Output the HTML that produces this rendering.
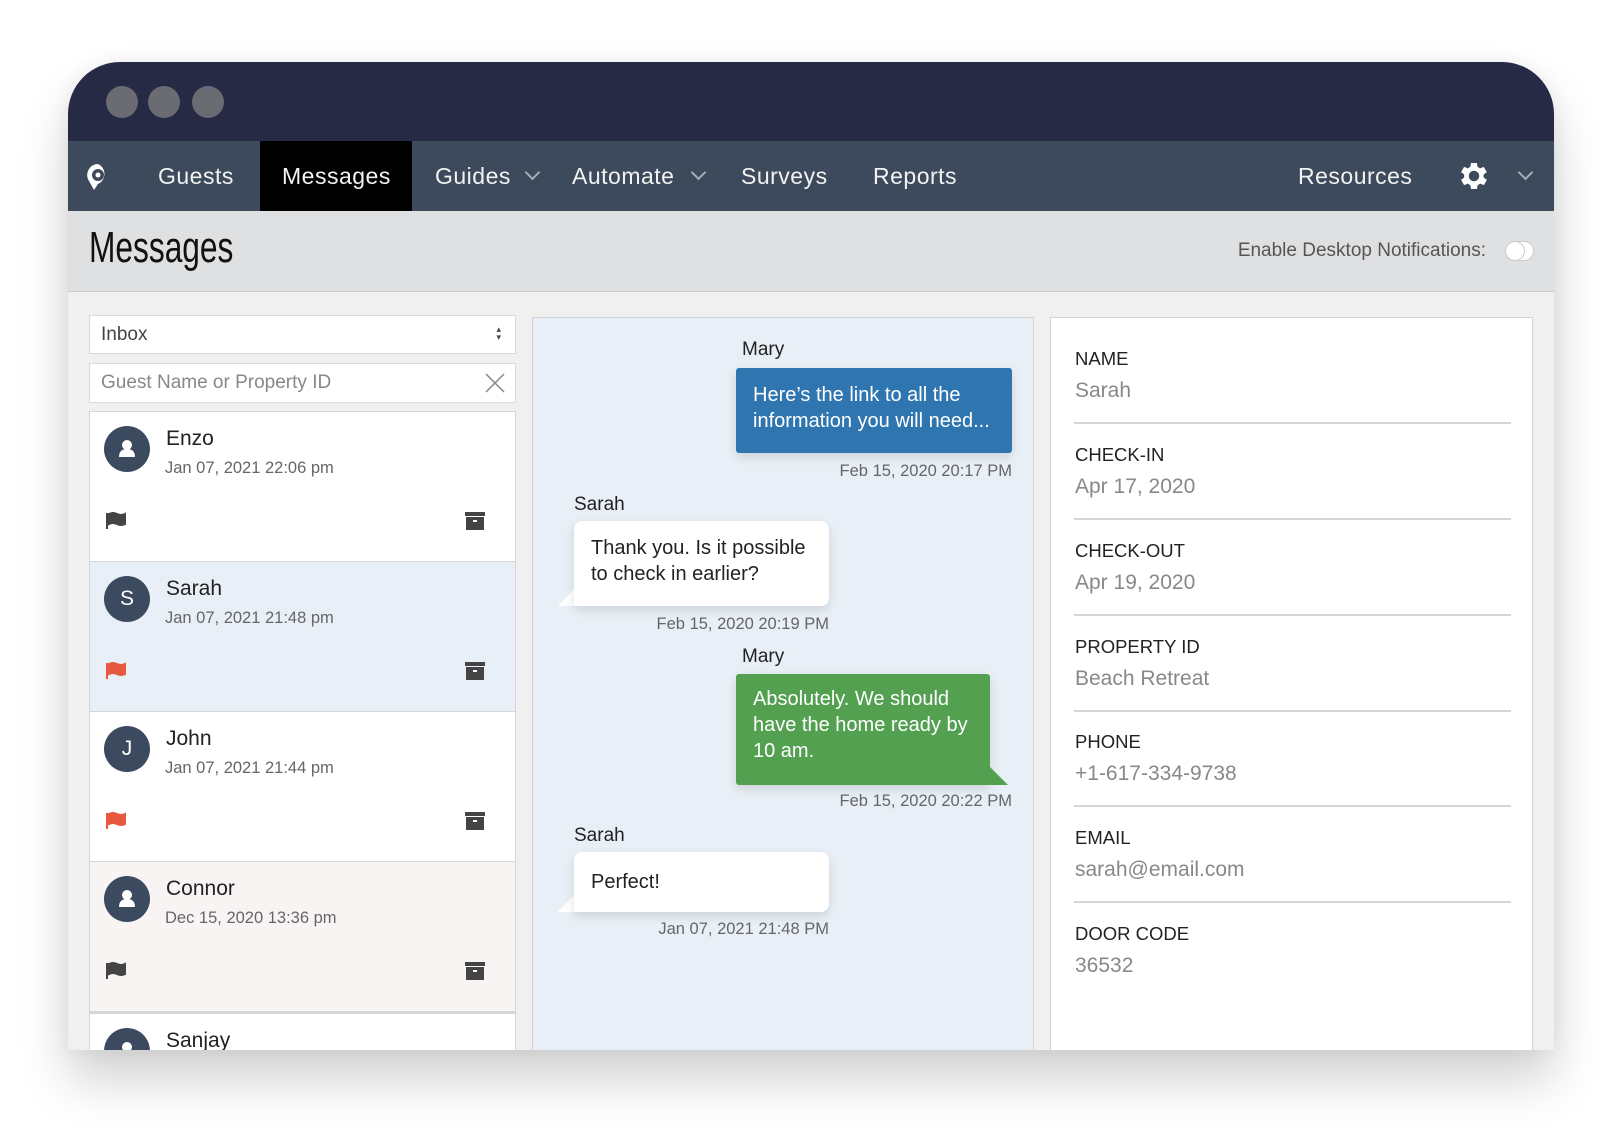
<!DOCTYPE html>
<html><head><meta charset="utf-8"><style>
*{box-sizing:border-box;margin:0;padding:0}
body{width:1622px;height:1124px;background:#fff;position:relative;overflow:hidden;font-family:"Liberation Sans",sans-serif}
.abs{position:absolute}
.win{left:68px;top:62px;width:1486px;height:988px;border-radius:52px 52px 0 0;overflow:hidden;background:#f0f0f0;box-shadow:0 30px 50px rgba(0,0,0,.18),0 0 20px rgba(0,0,0,.06)}
.dot{width:32px;height:32px;border-radius:50%;background:#6a6b73;top:24px}
.nav{top:79px;left:0;width:1486px;height:70px;background:#3c4a5c}
.nt{color:#f2f2f2;font-size:23px;letter-spacing:.5px;top:0;line-height:70px}
.chev{width:11px;height:11px;border-right:2px solid #aab;border-bottom:2px solid #aab;transform:rotate(45deg)}
.hdr{top:149px;left:0;width:1486px;height:81px;background:#dfe0e2;border-bottom:1px solid #ccc}
.box{background:#fff;border:2px solid #d9d9d9}
.item{left:21px;width:427px;height:150px;border:1px solid #d6d6d6;border-top:none}
.av{left:14px;top:14px;width:46px;height:46px;border-radius:50%;background:#3b4a5e;color:#fff;font-size:21px;text-align:center;line-height:46px}
.nm{left:76px;top:15px;font-size:21px;color:#222}
.dt{left:75px;top:47px;font-size:16.5px;color:#666}
.flag{left:16px;top:100px}
.arc{left:375px;top:100px}
.who{font-size:19px;color:#222}
.ts{font-size:16.5px;color:#666;text-align:right}
.bub{font-size:20px;line-height:26px;padding:0 17px;box-shadow:0 4px 10px rgba(0,0,0,.12)}
.lbl{left:24px;font-size:18.5px;color:#222}
.val{left:24px;font-size:21px;color:#888}
.hr{left:23px;width:437px;height:2px;background:#d5d5d5}
</style></head><body>
<div class="abs win">
  <div class="abs" style="left:0;top:0;width:1486px;height:79px;background:#272a45"></div>
  <div class="abs dot" style="left:38px"></div>
  <div class="abs dot" style="left:80px"></div>
  <div class="abs dot" style="left:124px"></div>
  <div class="abs nav">
    <svg class="abs" style="left:16px;top:21px" width="28" height="30" viewBox="0 0 28 30"><path d="M14 2a11 11 0 0 0-9 17l5 9 4-6a11 11 0 0 0 0-20z" fill="#fff"/><circle cx="14" cy="13" r="6" fill="#3c4a5c"/><circle cx="14" cy="13" r="2.5" fill="#fff"/></svg>
    <div class="abs nt" style="left:90px">Guests</div>
    <div class="abs" style="left:192px;top:0;width:152px;height:70px;background:#000"></div>
    <div class="abs nt" style="left:214px">Messages</div>
    <div class="abs nt" style="left:367px">Guides</div>
    <div class="abs chev" style="left:459px;top:26px"></div>
    <div class="abs nt" style="left:504px">Automate</div>
    <div class="abs chev" style="left:625px;top:26px"></div>
    <div class="abs nt" style="left:673px">Surveys</div>
    <div class="abs nt" style="left:805px">Reports</div>
    <div class="abs nt" style="left:1230px">Resources</div>
    <svg class="abs" style="left:1388px;top:17px" width="36" height="36" viewBox="0 0 24 24"><path fill="#fff" d="M19.4 13a7.5 7.5 0 0 0 0-2l2.1-1.6-2-3.5-2.5 1a7.6 7.6 0 0 0-1.7-1L15 3.3h-4l-.4 2.6a7.6 7.6 0 0 0-1.7 1l-2.5-1-2 3.5L6.5 11a7.5 7.5 0 0 0 0 2l-2.1 1.6 2 3.5 2.5-1a7.6 7.6 0 0 0 1.7 1l.4 2.6h4l.4-2.6a7.6 7.6 0 0 0 1.7-1l2.5 1 2-3.5zM13 15.5a3.5 3.5 0 1 1 0-7 3.5 3.5 0 0 1 0 7z" transform="translate(-1 0)"/></svg>
    <div class="abs chev" style="left:1452px;top:26px"></div>
  </div>
  <div class="abs hdr">
    <div class="abs" style="left:21px;top:12px;font-size:44px;color:#111;transform:scaleX(.72);transform-origin:left;font-family:'Liberation Sans Narrow','Liberation Sans',sans-serif">Messages</div>
    <div class="abs" style="right:68px;top:29px;font-size:19px;color:#555">Enable Desktop Notifications:</div>
    <div class="abs" style="left:1437px;top:30px;width:29px;height:20px;border-radius:10px;background:#fff;border:1px solid #ccc"></div>
    <div class="abs" style="left:1437px;top:30px;width:20px;height:20px;border-radius:50%;background:#fff;border:1px solid #ccc"></div>
  </div>
  <!-- left col -->
  <div class="abs box" style="left:21px;top:253px;width:427px;height:39px;border-width:1.5px"><span class="abs" style="left:11px;top:8px;font-size:19px;color:#444">Inbox</span><span class="abs" style="right:14px;top:9px;font-size:9px;color:#444;line-height:8px">▴<br>▾</span></div>
  <div class="abs box" style="left:21px;top:301px;width:427px;height:40px;border-width:1.5px"><span class="abs" style="left:11px;top:8px;font-size:19px;color:#888">Guest Name or Property ID</span><svg class="abs" style="right:10px;top:9px" width="20" height="20"><path d="M1 1L19 19M19 1L1 19" stroke="#888" stroke-width="1.5"/></svg></div>
  <div class="abs" style="left:21px;top:349px;width:427px;height:1px;background:#d6d6d6"></div>

  <div class="abs item" style="top:350px;background:#fff">
    <div class="abs av"><svg width="46" height="46"><circle cx="23" cy="19" r="5" fill="#fff"/><path d="M15 31q0-8 8-8t8 8z" fill="#fff"/></svg></div>
    <div class="abs nm">Enzo</div><div class="abs dt">Jan 07, 2021 22:06 pm</div>
    <svg class="abs flag" width="22" height="18"><path d="M1 1v16M3 2q4-2 8 0t8 0v10q-4 2-8 0t-8 0z" stroke="#444" stroke-width="2" fill="#444"/></svg>
    <svg class="abs arc" width="20" height="18"><rect x="0" y="0" width="20" height="4" fill="#444"/><rect x="1" y="5" width="18" height="13" fill="#444"/><rect x="8" y="8" width="4" height="2" fill="#fff"/></svg>
  </div>
  <div class="abs item" style="top:500px;background:#e8eff6">
    <div class="abs av">S</div>
    <div class="abs nm">Sarah</div><div class="abs dt">Jan 07, 2021 21:48 pm</div>
    <svg class="abs flag" width="22" height="18"><path d="M1 1v16M3 2q4-2 8 0t8 0v10q-4 2-8 0t-8 0z" stroke="#e8583f" stroke-width="2" fill="#e8583f"/></svg>
    <svg class="abs arc" width="20" height="18"><rect x="0" y="0" width="20" height="4" fill="#444"/><rect x="1" y="5" width="18" height="13" fill="#444"/><rect x="8" y="8" width="4" height="2" fill="#fff"/></svg>
  </div>
  <div class="abs item" style="top:650px;background:#fff">
    <div class="abs av">J</div>
    <div class="abs nm">John</div><div class="abs dt">Jan 07, 2021 21:44 pm</div>
    <svg class="abs flag" width="22" height="18"><path d="M1 1v16M3 2q4-2 8 0t8 0v10q-4 2-8 0t-8 0z" stroke="#e8583f" stroke-width="2" fill="#e8583f"/></svg>
    <svg class="abs arc" width="20" height="18"><rect x="0" y="0" width="20" height="4" fill="#444"/><rect x="1" y="5" width="18" height="13" fill="#444"/><rect x="8" y="8" width="4" height="2" fill="#fff"/></svg>
  </div>
  <div class="abs item" style="top:800px;background:#f9f4f4">
    <div class="abs av"><svg width="46" height="46"><circle cx="23" cy="19" r="5" fill="#fff"/><path d="M15 31q0-8 8-8t8 8z" fill="#fff"/></svg></div>
    <div class="abs nm">Connor</div><div class="abs dt">Dec 15, 2020 13:36 pm</div>
    <svg class="abs flag" width="22" height="18"><path d="M1 1v16M3 2q4-2 8 0t8 0v10q-4 2-8 0t-8 0z" stroke="#444" stroke-width="2" fill="#444"/></svg>
    <svg class="abs arc" width="20" height="18"><rect x="0" y="0" width="20" height="4" fill="#444"/><rect x="1" y="5" width="18" height="13" fill="#444"/><rect x="8" y="8" width="4" height="2" fill="#fff"/></svg>
  </div>
  <div class="abs item" style="top:950px;background:#fff;border-top:2px solid #d6d6d6">
    <div class="abs av"><svg width="46" height="46"><circle cx="23" cy="19" r="5" fill="#fff"/><path d="M15 31q0-8 8-8t8 8z" fill="#fff"/></svg></div>
    <div class="abs nm" style="left:76px">Sanjay</div>
  </div>

  <!-- middle -->
  <div class="abs" style="left:464px;top:255px;width:502px;height:740px;background:#e8eff6;border:1.5px solid #d2d2d2"></div>
  <div class="abs who" style="left:674px;top:277px">Mary</div>
  <div class="abs bub" style="left:668px;top:306px;width:276px;height:85px;background:#2f76b1;color:#fff;padding-top:14px;border-radius:3px">Here’s the link to all the information you will need...</div>
  <div class="abs ts" style="left:700px;width:244px;top:400px">Feb 15, 2020 20:17 PM</div>
  <div class="abs who" style="left:506px;top:432px">Sarah</div>
  <svg class="abs" style="left:490px;top:524px" width="17" height="20"><path d="M0 20L16 3V20z" fill="#fff"/></svg>
  <div class="abs bub" style="left:506px;top:459px;width:255px;height:85px;background:#fff;color:#222;padding-top:14px;border-radius:8px 8px 8px 0">Thank you. Is it possible to check in earlier?</div>
  <div class="abs ts" style="left:500px;width:261px;top:553px">Feb 15, 2020 20:19 PM</div>
  <div class="abs who" style="left:674px;top:584px">Mary</div>
  <div class="abs bub" style="left:668px;top:612px;width:254px;height:111px;background:#53a051;color:#fff;padding-top:12px;border-radius:3px 3px 0 3px">Absolutely. We should have the home ready by 10 am.</div>
  <svg class="abs" style="left:920px;top:703px" width="24" height="20"><path d="M0 0L20 20H0z" fill="#53a051"/></svg>
  <div class="abs ts" style="left:700px;width:244px;top:730px">Feb 15, 2020 20:22 PM</div>
  <div class="abs who" style="left:506px;top:763px">Sarah</div>
  <svg class="abs" style="left:490px;top:830px" width="17" height="20"><path d="M0 20L16 3V20z" fill="#fff"/></svg>
  <div class="abs bub" style="left:506px;top:790px;width:255px;height:60px;background:#fff;color:#222;padding-top:17px;border-radius:8px 8px 8px 0">Perfect!</div>
  <div class="abs ts" style="left:500px;width:261px;top:858px">Jan 07, 2021 21:48 PM</div>

  <!-- right -->
  <div class="abs" style="left:982px;top:255px;width:483px;height:740px;background:#fff;border:1.5px solid #d2d2d2">
    <div class="abs lbl" style="top:30px">NAME</div><div class="abs val" style="top:61px">Sarah</div><div class="abs hr" style="top:104px"></div>
    <div class="abs lbl" style="top:126px">CHECK-IN</div><div class="abs val" style="top:157px">Apr 17, 2020</div><div class="abs hr" style="top:200px"></div>
    <div class="abs lbl" style="top:222px">CHECK-OUT</div><div class="abs val" style="top:253px">Apr 19, 2020</div><div class="abs hr" style="top:296px"></div>
    <div class="abs lbl" style="top:318px">PROPERTY ID</div><div class="abs val" style="top:349px">Beach Retreat</div><div class="abs hr" style="top:392px"></div>
    <div class="abs lbl" style="top:413px">PHONE</div><div class="abs val" style="top:444px">+1-617-334-9738</div><div class="abs hr" style="top:487px"></div>
    <div class="abs lbl" style="top:509px">EMAIL</div><div class="abs val" style="top:540px">sarah@email.com</div><div class="abs hr" style="top:583px"></div>
    <div class="abs lbl" style="top:605px">DOOR CODE</div><div class="abs val" style="top:636px">36532</div>
  </div>
</div>
</body></html>
